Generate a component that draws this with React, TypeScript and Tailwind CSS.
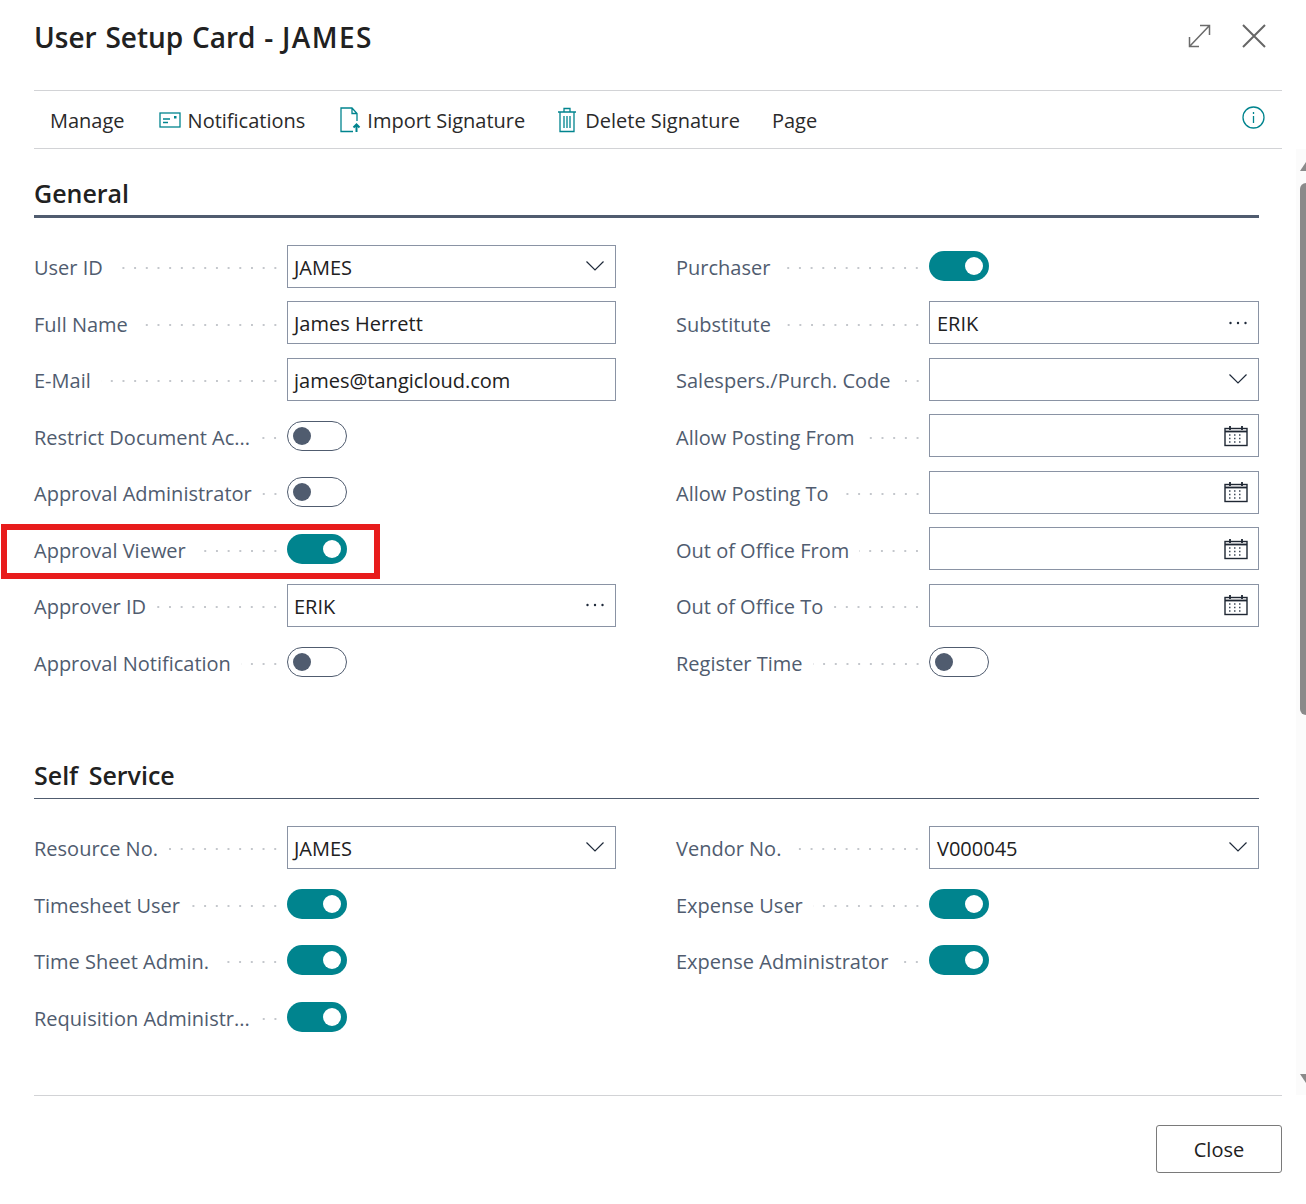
import React from "react";

const Chevron = () => (
  <svg width="20" height="12" viewBox="0 0 20 12" fill="none" stroke="#1f2a3a" strokeWidth="1.2"><path d="M1.5 1.5 L10 10 L18.5 1.5" /></svg>
);
const Dots = () => (
  <svg width="20" height="6" viewBox="0 0 20 6" fill="#1f2a3a"><circle cx="2.5" cy="3" r="1.2" /><circle cx="10" cy="3" r="1.2" /><circle cx="17.5" cy="3" r="1.2" /></svg>
);
const Calendar = () => (
  <svg width="24" height="22" viewBox="0 0 24 22" fill="none" stroke="#1f2733">
    <rect x="1" y="3.5" width="22" height="17" strokeWidth="1.4" />
    <path d="M1 6.5 H23" strokeWidth="1.8" />
    <path d="M6 1 V5 M18 1 V5" strokeWidth="1.8" />
    <path d="M5 10 H8 M10 10 H13 M15 10 H18 M5 13.5 H8 M10 13.5 H13 M15 13.5 H18 M5 17 H8 M10 17 H13 M15 17 H18" strokeWidth="1.6" strokeDasharray="1.5 1.5" stroke="#3f4a58" />
  </svg>
);

type Kind = "text" | "select" | "lookup" | "date" | "on" | "off";
type F = { label: string; kind: Kind; value?: string; mark?: boolean };

const Toggle = ({ on }: { on: boolean }) =>
  on ? (
    <div className="w-[60px] h-[30px] rounded-full bg-[#00848e] flex items-center justify-end pr-[6px]">
      <div className="w-[18px] h-[18px] rounded-full bg-white" />
    </div>
  ) : (
    <div className="w-[60px] h-[30px] rounded-full border border-[#505c6f] bg-white flex items-center pl-[5px]">
      <div className="w-[18px] h-[18px] rounded-full bg-[#505c6f]" />
    </div>
  );

const Field = ({ f, right }: { f: F; right?: boolean }) => {
  if (f.kind === "on" || f.kind === "off") {
    return <Toggle on={f.kind === "on"} />;
  }
  return (
    <div className={`w-full h-[43px] border border-[#8a93a4] flex items-center justify-between pr-[10px] text-[#212121] ${right ? "pl-[7px]" : "pl-[6px]"}`}>
      <span className="pt-[3px]">{f.value}</span>
      {f.kind === "select" && <Chevron />}
      {f.kind === "lookup" && <Dots />}
      {f.kind === "date" && <span className="ml-auto flex"><Calendar /></span>}
    </div>
  );
};

const Row = ({ f, right }: { f: F; right?: boolean }) => (
  <div className="relative h-[56.5px]">
    <div className="flex items-center h-[43px]">
      <div className="w-[253px] shrink-0 flex items-center text-[#505c6f] pt-[3.6px]">
        <span className="whitespace-nowrap">{f.label}</span>
        <div className="flex-1 ml-[10px] mr-[6px] h-[4px] bg-[radial-gradient(circle,#c4c7cc_1.2px,transparent_1.5px)] bg-[length:11.7px_4px] bg-right" />
      </div>
      <div className="flex-1 min-w-0"><Field f={f} right={right} /></div>
    </div>
    {f.mark && (
      <div className="absolute left-[-33px] top-[-3px] w-[379px] h-[55px] border-[6px] border-[#e81c1c] pointer-events-none" />
    )}
  </div>
);

const ColL = ({ items }: { items: F[] }) => (
  <div className="w-[582px]">
    {items.map((f) => (
      <Row key={f.label} f={f} />
    ))}
  </div>
);
const ColR = ({ items }: { items: F[] }) => (
  <div className="w-[583px]">
    {items.map((f) => (
      <Row key={f.label} f={f} right />
    ))}
  </div>
);

const generalL: F[] = [
  { label: "User ID", kind: "select", value: "JAMES" },
  { label: "Full Name", kind: "text", value: "James Herrett" },
  { label: "E-Mail", kind: "text", value: "james@tangicloud.com" },
  { label: "Restrict Document Ac...", kind: "off" },
  { label: "Approval Administrator", kind: "off" },
  { label: "Approval Viewer", kind: "on", mark: true },
  { label: "Approver ID", kind: "lookup", value: "ERIK" },
  { label: "Approval Notification", kind: "off" },
];
const generalR: F[] = [
  { label: "Purchaser", kind: "on" },
  { label: "Substitute", kind: "lookup", value: "ERIK" },
  { label: "Salespers./Purch. Code", kind: "select" },
  { label: "Allow Posting From", kind: "date" },
  { label: "Allow Posting To", kind: "date" },
  { label: "Out of Office From", kind: "date" },
  { label: "Out of Office To", kind: "date" },
  { label: "Register Time", kind: "off" },
];
const selfL: F[] = [
  { label: "Resource No.", kind: "select", value: "JAMES" },
  { label: "Timesheet User", kind: "on" },
  { label: "Time Sheet Admin.", kind: "on" },
  { label: "Requisition Administr...", kind: "on" },
];
const selfR: F[] = [
  { label: "Vendor No.", kind: "select", value: "V000045" },
  { label: "Expense User", kind: "on" },
  { label: "Expense Administrator", kind: "on" },
];

export default function App() {
  return (
    <div className="w-[1306px] h-[1204px] overflow-hidden bg-white text-[20px] leading-[28px] font-['Open_Sans','Noto_Sans',sans-serif]">
      <header className="h-[90px] pl-[34px] pr-[40px] flex justify-between">
        <h1 className="text-[28px] leading-[38px] pt-[18px] font-semibold text-[#212121] [word-spacing:1.5px]">User Setup Card - <span className="tracking-[1.4px]">JAMES</span></h1>
        <div className="flex items-start pt-[24px] gap-[31px]">
          <svg width="23" height="24" viewBox="0 0 23 24" fill="none" stroke="#6b6b6b" strokeWidth="1.5"><path d="M1.5 22.5 L21.5 1.5 M12 1.5 H21.5 V11 M1.5 13 V22.5 H11" /></svg>
          <svg width="24" height="24" viewBox="0 0 24 24" fill="none" stroke="#666" strokeWidth="2"><path d="M1 1 L23 23 M23 1 L1 23" /></svg>
        </div>
      </header>

      <nav className="ml-[34px] w-[1248px] h-[59px] border-y border-[#d2d3d6] flex items-center pl-[16px] pr-[17px] text-[#2a2a2a]">
        <span className="pt-[2px]">Manage</span>
        <svg className="ml-[34px] mr-[7px]" width="22" height="16" viewBox="0 0 22 16" fill="none" stroke="#00848e" strokeWidth="1.3"><rect x="1" y="1" width="20" height="14" /><path d="M4 7 H11 M4 10.5 H9" /><rect x="15" y="4" width="2.5" height="2.5" fill="#00848e" stroke="none" /></svg>
        <span className="pt-[2px]">Notifications</span>
        <svg className="ml-[35px] mr-[6px]" width="21" height="26" viewBox="0 0 21 26" fill="none" stroke="#00848e" strokeWidth="1.3"><path d="M13 24.5 H1 V1 H12 L17 6.5 V14 M12 1 V6.5 H17" /><path d="M16.5 25 V18 M13.5 20.5 L16.5 17.5 L19.5 20.5" strokeWidth="2" /></svg>
        <span className="pt-[2px]">Import Signature</span>
        <svg className="ml-[32px] mr-[8px]" width="20" height="26" viewBox="0 0 20 26" fill="none" stroke="#00848e" strokeWidth="1.3"><path d="M1 5 H19 M7 5 V1.5 H13 V5 M3 5 V24.5 H17 V5 M7 9 V21 M10 9 V21 M13 9 V21" /></svg>
        <span className="pt-[2px]">Delete Signature</span>
        <span className="ml-[32px] pt-[2px]">Page</span>
        <svg className="ml-auto mb-[4px]" width="23" height="23" viewBox="0 0 23 23" fill="none" stroke="#00848e" strokeWidth="1.3"><circle cx="11.5" cy="11.5" r="10.5" /><path d="M11.5 10 V17 M11.5 6 V8" /></svg>
      </nav>

      <div className="h-[946px] flex pl-[34px] justify-between">
        <main className="w-[1225px]">
          <section>
            <h2 className="h-[69px] pt-[27px] border-b-[3px] border-[#505c6f] text-[25px] leading-[34px] font-semibold text-[#212121]">General</h2>
            <div className="pt-[26.9px] flex justify-between">
              <ColL items={generalL} />
              <ColR items={generalR} />
            </div>
          </section>
          <section>
            <h2 className="h-[102.5px] pt-[61px] border-b border-[#505c6f] text-[25px] leading-[34px] font-semibold text-[#212121] [word-spacing:4px]">Self Service</h2>
            <div className="pt-[26.5px] flex justify-between">
              <ColL items={selfL} />
              <ColR items={selfR} />
            </div>
          </section>
        </main>
        <aside className="w-[10px] bg-[#fbfbfb] flex flex-col items-end">
          <div className="h-[22px] pt-[13px]">
            <div className="w-0 h-0 border-l-[6px] border-r-0 border-b-[9px] border-l-transparent border-b-[#8a8a8a]" />
          </div>
          <div className="mt-[12px] w-[6px] h-[532px] bg-[#8a8a8a] rounded-tl-[6px] rounded-bl-[6px]" />
          <div className="mt-auto mb-[12px] w-0 h-0 border-l-[6px] border-t-[9px] border-l-transparent border-t-[#8a8a8a]" />
        </aside>
      </div>

      <footer className="ml-[34px] w-[1248px] border-t border-[#d2d3d6] pt-[29px] flex justify-end">
        <button className="w-[126px] h-[48px] pt-[2px] rounded-[3px] border border-[#7a7a7a] bg-white text-[#212121] font-medium">Close</button>
      </footer>
    </div>
  );
}
